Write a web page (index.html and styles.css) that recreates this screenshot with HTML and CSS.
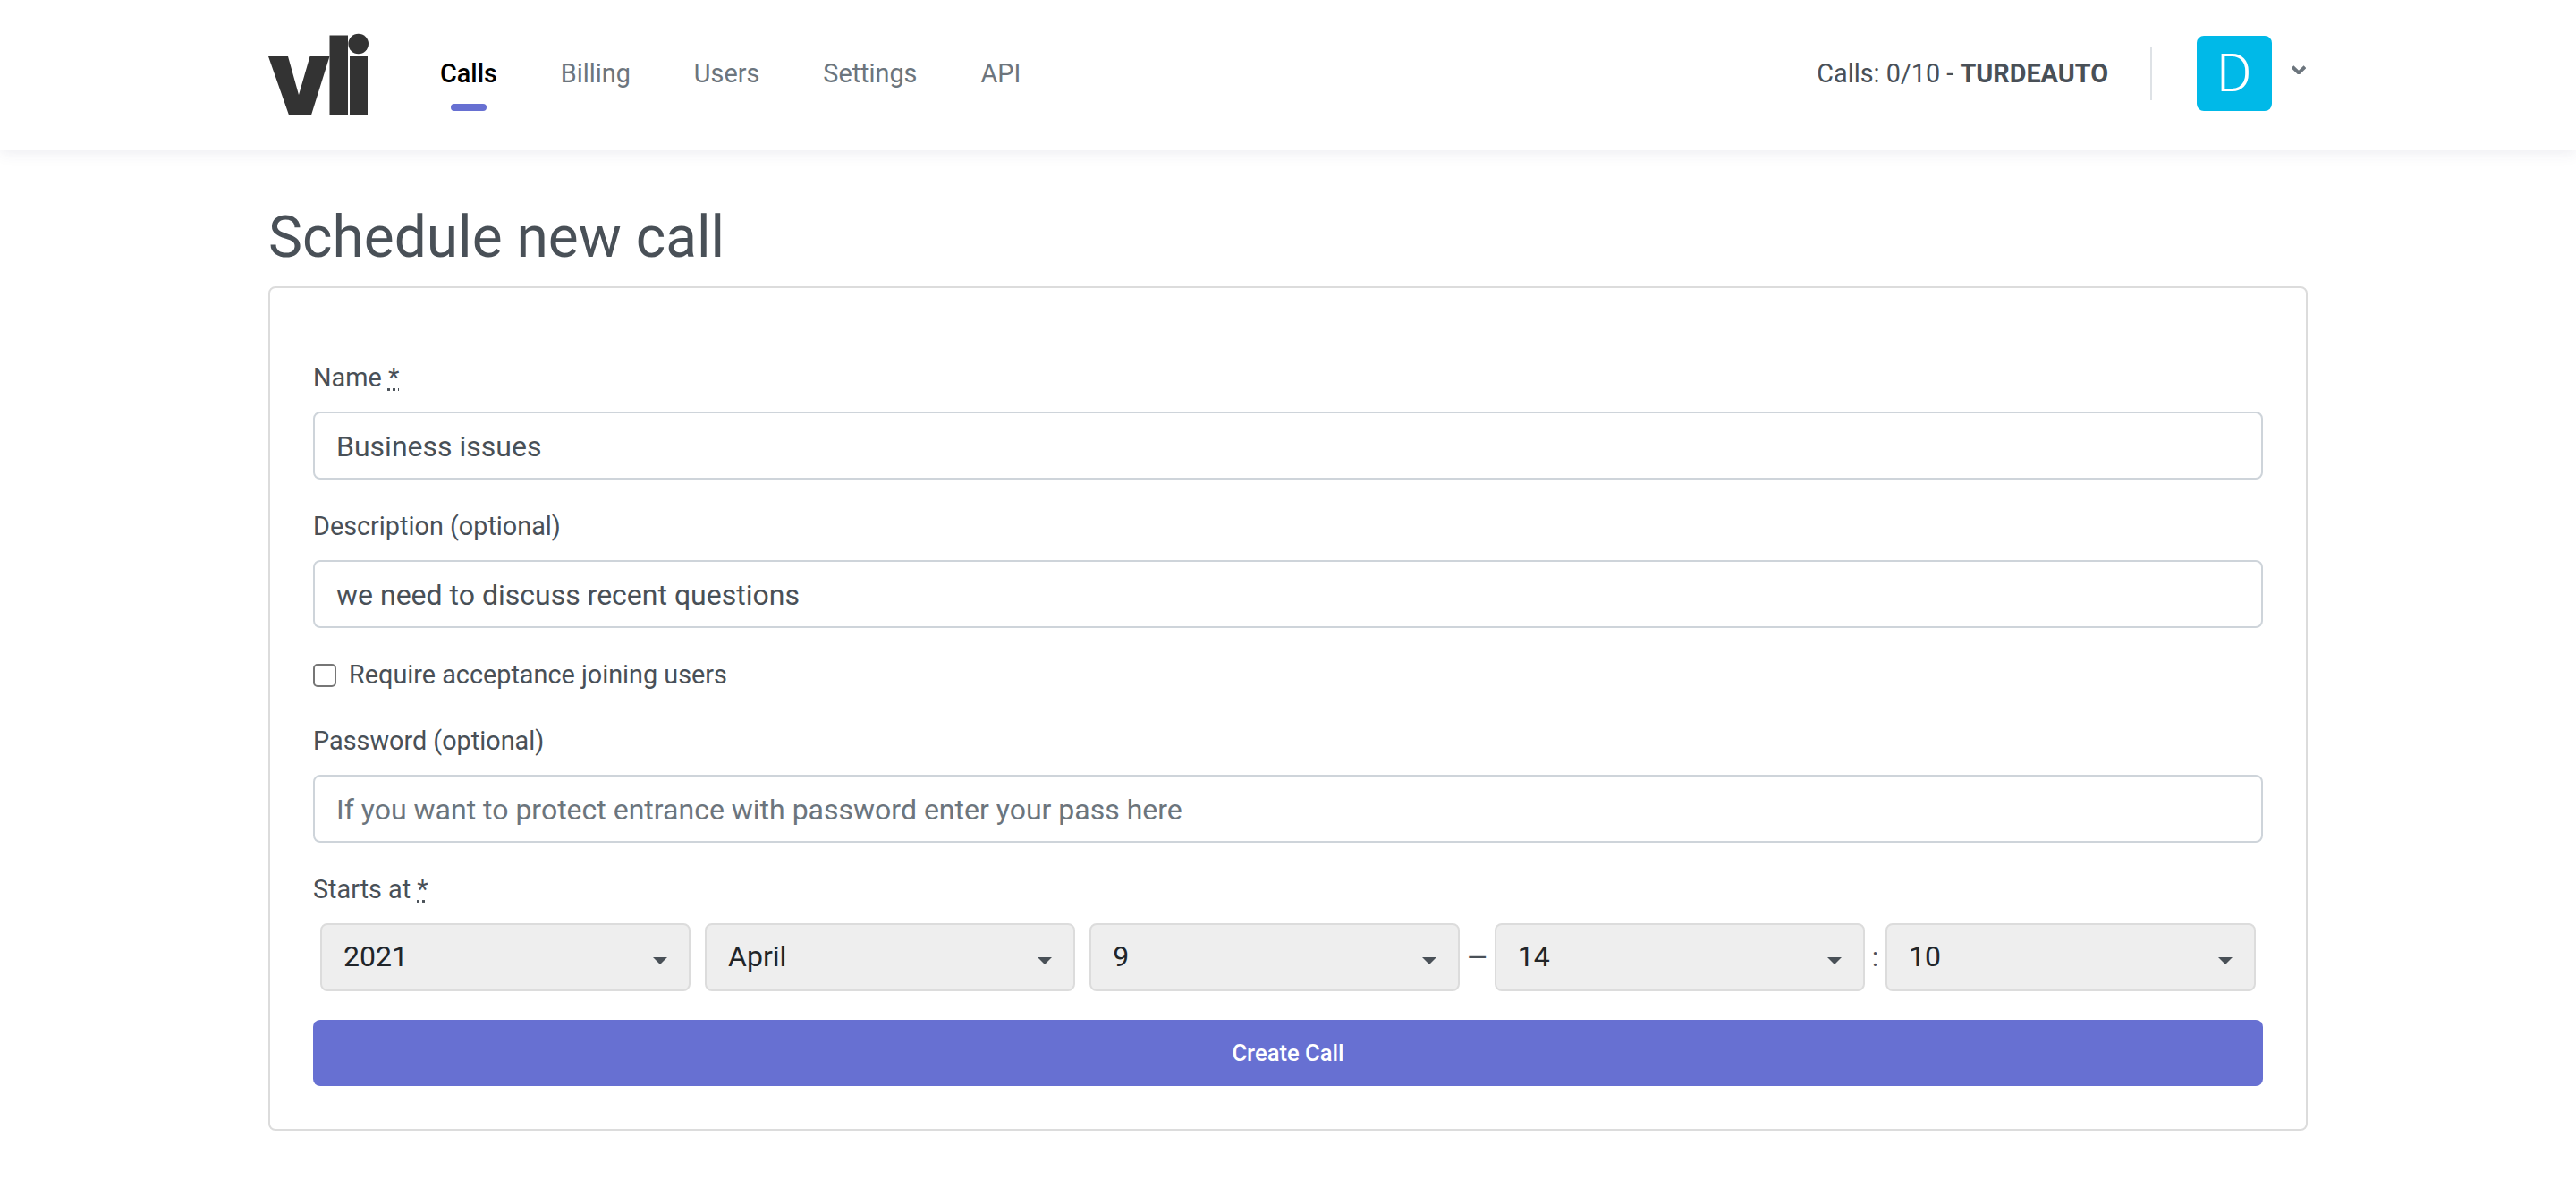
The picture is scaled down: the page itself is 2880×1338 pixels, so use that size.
FILE: index.html
```html
<!DOCTYPE html>
<html lang="en">
<head>
<meta charset="utf-8">
<title>Schedule new call</title>
<link rel="stylesheet" href="styles.css">
</head>
<body>
<header class="topbar">
  <div class="container topbar-inner">
    <a class="logo" href="#" aria-label="vli">
      <svg width="112" height="92" viewBox="0 0 112 92"><path d="M0 26H22L34 69L46.500 26H68.500L48 91.500H23Z" fill="#333"/><path d="M68.500 2.500H89V91.500H68.500Z M91 26H111V91.500H91Z" fill="#333"/><circle cx="100.700" cy="12" r="11.300" fill="#333"/></svg>
    </a>
    <nav class="nav">
      <a class="nav-link active" href="#">Calls</a>
      <a class="nav-link" href="#">Billing</a>
      <a class="nav-link" href="#">Users</a>
      <a class="nav-link" href="#">Settings</a>
      <a class="nav-link" href="#">API</a>
    </nav>
    <div class="account">
      <span class="quota">Calls: 0/10 - <b>TURDEAUTO</b></span>
      <span class="divider"></span>
      <span class="avatar">D</span>
      <svg class="chevron" width="16" height="10" viewBox="0 0 16 10"><path d="M1 1.800L8 8.400L15 1.800" fill="none" stroke="#6c757d" stroke-width="4"/></svg>
    </div>
  </div>
</header>
<main class="container">
  <h1 class="title">Schedule new call</h1>
  <form class="card">
    <div class="group">
      <label class="label" for="name">Name <abbr title="required">*</abbr></label>
      <input class="control" id="name" type="text" value="Business issues">
    </div>
    <div class="group">
      <label class="label" for="desc">Description (optional)</label>
      <input class="control" id="desc" type="text" value="we need to discuss recent questions">
    </div>
    <div class="check">
      <input class="checkbox" id="req" type="checkbox">
      <label class="check-label" for="req">Require acceptance joining users</label>
    </div>
    <div class="group">
      <label class="label" for="pass">Password (optional)</label>
      <input class="control" id="pass" type="text" placeholder="If you want to protect entrance with password enter your pass here">
    </div>
    <div class="group starts">
      <span class="label">Starts at <abbr title="required">*</abbr></span>
      <div class="date-row">
        <div class="select-wrap"><select class="select"><option>2021</option></select></div>
        <div class="select-wrap"><select class="select"><option>April</option></select></div>
        <div class="select-wrap"><select class="select"><option>9</option></select></div>
        <span class="sep">—</span>
        <div class="select-wrap"><select class="select"><option>14</option></select></div>
        <span class="sep colon">:</span>
        <div class="select-wrap"><select class="select"><option>10</option></select></div>
      </div>
    </div>
    <button class="submit" type="button">Create Call</button>
  </form>
</main>
</body>
</html>
```
FILE: styles.css
```css
* { box-sizing: border-box; }
html, body { margin: 0; padding: 0; }
body {
  background: #fff;
  color: #495057;
  font-family: Roboto, "Liberation Sans", sans-serif;
  font-size: 28.8px;
  line-height: 1.5;
}
.container { width: 2280px; margin: 0 auto; }
.topbar {
  height: 168px;
  background: #fff;
  box-shadow: 0 2px 16px rgba(60, 60, 110, 0.10);
}
.topbar-inner { display: flex; align-items: flex-start; height: 100%; }
.logo { display: block; margin-top: 37px; height: 92px; width: 112px; flex: none; }
.nav { display: flex; gap: 71px; margin-left: 80px; margin-top: 61px; }
.nav-link {
  position: relative;
  color: #6c757d;
  text-decoration: none;
  font-size: 28.8px;
  line-height: 42px;
}
.nav-link.active { color: #000; font-weight: 500; }
.nav-link.active::after {
  content: "";
  position: absolute;
  left: 12px;
  width: 40px;
  top: 55px;
  height: 8px;
  border-radius: 4px;
  background: #6770d2;
}
.account { margin-left: auto; display: flex; align-items: flex-start; }
.quota { margin-top: 61px; line-height: 42px; color: #495057; }
.quota b { font-weight: 700; }
.divider { width: 2px; height: 60px; background: #dee2e6; margin: 52px 50px 0 47px; }
.avatar {
  width: 84px;
  height: 84px;
  margin-top: 40px;
  background: #00b9e8;
  border-radius: 8px;
  color: #fff;
  font-weight: 300;
  font-size: 60px;
  line-height: 84px;
  text-align: center;
}
.chevron { margin: 73px 2px 0 22px; }
.title {
  margin: 0;
  padding-top: 60px;
  height: 152px;
  font-size: 64px;
  line-height: 76px;
  font-weight: 400;
  color: #495057;
}
.card {
  display: block;
  border: 2px solid #dcdcdc;
  border-radius: 8px;
  padding: 80px 48px 50px;
  height: 944px;
}
.group { margin-bottom: 32px; }
.label { display: block; line-height: 41px; margin-bottom: 17px; color: #495057; }
abbr { text-decoration: underline dotted; }
.control {
  display: block;
  width: 100%;
  height: 76px;
  padding: 1px 24px 0;
  border: 2px solid #ced4da;
  border-radius: 8px;
  background: #fff;
  font-family: inherit;
  font-size: 32px;
  color: #495057;
  outline: none;
}
.control::placeholder { color: #6c757d; opacity: 1; }
.check { display: flex; align-items: center; height: 42px; margin-bottom: 32px; }
.checkbox {
  appearance: none;
  width: 26px;
  height: 26px;
  margin: 0 14px 0 0;
  background: #fff;
  border: 2px solid #767676;
  border-radius: 5px;
}
.check-label { line-height: 40px; padding-bottom: 2px; }
.starts { margin-bottom: 32px; }
.date-row { display: flex; align-items: center; padding: 0 8px; }
.select-wrap { position: relative; flex: 1 1 0; margin: 0 8px; height: 76px; }
.select-wrap:first-child { margin-left: 0; }
.select-wrap:last-child { margin-right: 0; }
.select-wrap::after {
  content: "";
  position: absolute;
  right: 26px;
  top: 38px;
  border-left: 8px solid transparent;
  border-right: 8px solid transparent;
  border-top: 8px solid #495057;
  pointer-events: none;
}
.select {
  appearance: none;
  display: block;
  width: 100%;
  height: 100%;
  padding: 0 24px 2px;
  background: #eee;
  border: 2px solid #dcdcdc;
  border-radius: 8px;
  font-family: inherit;
  font-size: 32px;
  color: #212529;
  outline: none;
}
.sep { color: #495057; line-height: 42px; }
.submit {
  display: block;
  width: 100%;
  height: 74px;
  border: 0;
  border-radius: 8px;
  background: #6770d2;
  color: #fff;
  font-family: inherit;
  font-size: 25.6px;
  font-weight: 500;
}
```
